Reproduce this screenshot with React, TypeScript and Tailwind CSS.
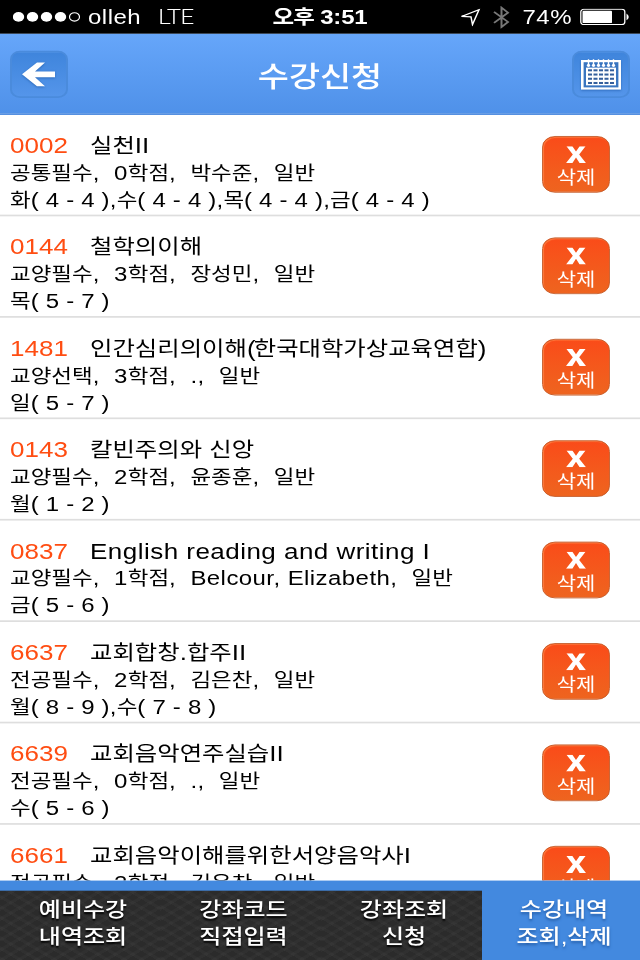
import React from "react";

const HANGUL = /([\uac00-\ud7a3]+)/;
const PIECES = /([\uac00-\ud7a3]+|[()])/;

// Hangul glyphs are set slightly smaller than the Latin text beside them.
function Mixed({ text, tightParens = false }: { text: string; tightParens?: boolean }) {
  return (
    <>
      {text.split(tightParens ? PIECES : HANGUL).map((part, i) => {
        if (part === "") return null;
        if (HANGUL.test(part)) return <span key={i} className="text-[0.937em] tracking-normal">{part}</span>;
        if (tightParens && (part === "(" || part === ")"))
          return <span key={i} className="tracking-[-0.07em]">{part}</span>;
        return <span key={i}>{part}</span>;
      })}
    </>
  );
}

const courses = [
  { code: "0002", name: "실천II", info: "공통필수,  0학점,  박수준,  일반", time: "화( 4 - 4 ),수( 4 - 4 ),목( 4 - 4 ),금( 4 - 4 )" },
  { code: "0144", name: "철학의이해", info: "교양필수,  3학점,  장성민,  일반", time: "목( 5 - 7 )" },
  { code: "1481", name: "인간심리의이해(한국대학가상교육연합)", info: "교양선택,  3학점,  .,  일반", time: "일( 5 - 7 )" },
  { code: "0143", name: "칼빈주의와 신앙", info: "교양필수,  2학점,  윤종훈,  일반", time: "월( 1 - 2 )" },
  { code: "0837", name: "English reading and writing I", info: "교양필수,  1학점,  Belcour, Elizabeth,  일반", time: "금( 5 - 6 )" },
  { code: "6637", name: "교회합창.합주II", info: "전공필수,  2학점,  김은찬,  일반", time: "월( 8 - 9 ),수( 7 - 8 )" },
  { code: "6639", name: "교회음악연주실습II", info: "전공필수,  0학점,  .,  일반", time: "수( 5 - 6 )" },
  { code: "6661", name: "교회음악이해를위한서양음악사I", info: "전공필수,  2학점,  김은찬,  일반", time: "" },
];

const tabs = [
  ["예비수강", "내역조회"],
  ["강좌코드", "직접입력"],
  ["강좌조회", "신청"],
  ["수강내역", "조회,삭제"],
];

function StatusBar() {
  return (
    <div className="grid h-10 shrink-0 grid-cols-3 items-center bg-black text-[24px] leading-10 text-white">
      <div className="flex items-center pl-[13px]">
        <svg width="68" height="14" viewBox="0 0 68 14">
          {[5.5, 19.5, 33.5, 47.5].map((x) => (
            <circle key={x} cx={x} cy="7" r="5.7" fill="white" />
          ))}
          <circle cx="61.5" cy="7" r="5" fill="none" stroke="white" strokeWidth="1.2" />
        </svg>
        <span className="ml-[7px] tracking-[0.5px]">olleh</span>
        <span className="ml-[17px] font-[Roboto] font-light tracking-[-0.8px]">LTE</span>
      </div>
      <div className="text-center font-bold tracking-[-0.2px]">
        <span className="text-[23.5px] tracking-[-0.8px]">오후</span>
        <span className="ml-[6px]">3:51</span>
      </div>
      <div className="flex items-center justify-end pr-[10px]">
        <svg width="21" height="21" viewBox="0 0 21 21" fill="none" stroke="white" strokeWidth="1.5">
          <path d="M1.5 9.5 19 1.5 12.5 19 11 10Z" />
        </svg>
        <svg className="ml-[12px]" width="17" height="27" viewBox="0 0 17 27" fill="none" stroke="#777" strokeWidth="2">
          <path d="M1 7 15 19 8.5 25V2L15 8 1 20" />
        </svg>
        <span className="ml-[12px] tracking-[0.5px]">74%</span>
        <svg className="ml-[8px]" width="50" height="20" viewBox="0 0 50 20">
          <rect x="0.8" y="1" width="44" height="18" rx="3" fill="none" stroke="white" strokeWidth="1.3" />
          <rect x="2.5" y="2.8" width="29.5" height="14.4" rx="1" fill="white" />
          <path d="M46.5 6Q51 10 46.5 14Z" fill="white" />
        </svg>
      </div>
    </div>
  );
}

const headerButton =
  "flex h-14 w-[58px] items-center justify-center rounded-[10px] border-2 border-[#4a8bdc] bg-linear-to-b from-[#3f85dc] to-[#5495ea]";

function Header() {
  return (
    <div className="flex h-24 shrink-0 items-start justify-between border-b-2 border-[#4989df] bg-linear-to-b from-[#66a6fa] to-[#4f91e9] px-[10px] pt-5">
      <button className={headerButton}>
        <svg width="34" height="30" viewBox="0 0 34 30" className="drop-shadow-[0_1px_1px_#2b69b8]">
          <path d="M0 15 15 1H23L13 11.5H33V18.5H13L23 29H15Z" fill="white" />
        </svg>
      </button>
      <h1 className="mt-[14px] text-[33.8px] font-medium leading-[34px] text-white">수강신청</h1>
      <button className={headerButton}>
        <svg width="42" height="38" viewBox="0 0 42 38" className="drop-shadow-[0_1px_1px_#2b69b8]">
          <rect x="2.3" y="3.3" width="37.4" height="32.4" fill="#3975c0" stroke="white" strokeWidth="2.6" />
          <rect x="6" y="11" width="30" height="21" fill="white" />
          {[8.5, 14, 19.5, 25, 30.5].map((x) =>
            [13, 18, 23, 28].map((y) => (
              <rect key={`${x}-${y}`} x={x - 0.5} y={y} width="4" height="2.4" fill="#345f9c" />
            ))
          )}
          {[8.5, 13.5, 18.5, 23.5, 28.5, 33.5].map((x) => (
            <g key={x}>
              <path d={`M${x} 1V9`} stroke="white" strokeWidth="1.4" />
              <circle cx={x} cy="8.5" r="1.7" fill="white" />
            </g>
          ))}
        </svg>
      </button>
    </div>
  );
}

function DeleteButton() {
  return (
    <button className="mt-[25px] flex h-[67px] w-[68px] flex-col items-center rounded-[13px] border border-[#c55a27] bg-linear-to-b from-[#fa4b19] to-[#ee641f] pt-[11px] text-white shadow-[inset_1px_1px_1px_#ff7a3d]">
      <svg width="20" height="20" viewBox="0 0 22 21" preserveAspectRatio="none">
        <path d="M0.5 0H7L11 6.5 15 0H21.5L14.5 10.2 22 21H15L11 14 7 21H0L7.5 10.2Z" fill="white" />
      </svg>
      <span className="mt-[7px] text-[21px] leading-[22px]">삭제</span>
    </button>
  );
}

export default function App() {
  return (
    <div className="h-[960px] w-[640px] overflow-hidden bg-white">
      <div className="flex h-[1136px] w-[640px] origin-top scale-y-[0.84507] flex-col overflow-hidden bg-white font-['Liberation_Sans','Noto_Sans_CJK_KR',sans-serif] text-black">
        <StatusBar />
        <Header />
        <div className="min-h-0 flex-1 overflow-hidden">
          {courses.map((c) => (
            <div key={c.code} className="flex h-[120px] justify-between border-b-2 border-[#dedede] pl-[10px] pr-[30px]">
              <div className="whitespace-pre pt-5 text-[24px] leading-8">
                <div className="flex text-[26px]">
                  <span className="w-20 text-[#ff4d12]">{c.code}</span>
                  <span className={c.name.startsWith("English") ? "tracking-[0.47px]" : ""}>
                    <Mixed text={c.name} tightParens />
                  </span>
                </div>
                <div className="tracking-[0.43px]"><Mixed text={c.info} /></div>
                <div className="-mt-px tracking-[0.2px]"><Mixed text={c.time} /></div>
              </div>
              <DeleteButton />
            </div>
          ))}
        </div>
        <div className="grid h-[94px] shrink-0 grid-cols-[161px_160px_161px_158px] bg-[#4389df] text-center text-[24px] font-medium leading-8 text-white">
          {tabs.map(([a, b], i) => (
            <div
              key={a}
              className={
                i === 3
                  ? "pl-[6px] pt-[19px] [text-shadow:0_2px_3px_#245ca5]"
                  : "mt-[12px] bg-[#2b2b2b] bg-[repeating-linear-gradient(35deg,#ffffff06_0_3px,transparent_4px_10px),repeating-linear-gradient(-35deg,#ffffff06_0_3px,transparent_4px_10px)] pl-[5px] pt-[7px] [text-shadow:0_2px_2px_#000]"
              }
            >
              <div>{a}</div>
              <div>{b}</div>
            </div>
          ))}
        </div>
      </div>
    </div>
  );
}
